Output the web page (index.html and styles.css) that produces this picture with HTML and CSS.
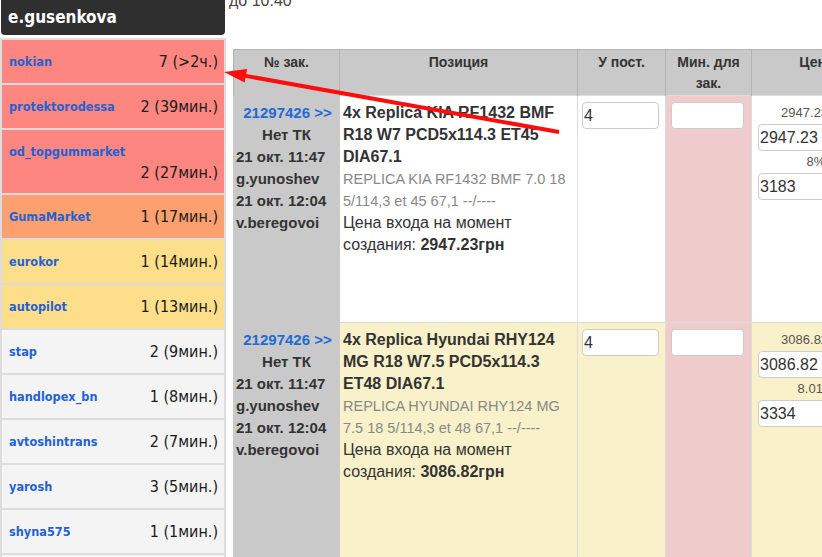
FILE: index.html
```html
<!DOCTYPE html>
<html lang="ru">
<head>
<meta charset="utf-8">
<title>Заказы поставщикам</title>
<link rel="stylesheet" href="styles.css">
</head>
<body>
<div class="page">
  <aside class="sidebar">
    <div class="sidebar-head">e.gusenkova</div>
    <ul class="supplier-list">
      <li class="supplier supplier--red"><a class="supplier-name" href="#">nokian</a><span class="count">7 (&gt;2ч.)</span></li>
      <li class="supplier supplier--red"><a class="supplier-name" href="#">protektorodessa</a><span class="count">2 (39мин.)</span></li>
      <li class="supplier supplier--red supplier--stacked"><a class="supplier-name" href="#">od_topgummarket</a><span class="count">2 (27мин.)</span></li>
      <li class="supplier supplier--orange"><a class="supplier-name" href="#">GumaMarket</a><span class="count">1 (17мин.)</span></li>
      <li class="supplier supplier--yellow"><a class="supplier-name" href="#">eurokor</a><span class="count">1 (14мин.)</span></li>
      <li class="supplier supplier--yellow"><a class="supplier-name" href="#">autopilot</a><span class="count">1 (13мин.)</span></li>
      <li class="supplier"><a class="supplier-name" href="#">stap</a><span class="count">2 (9мин.)</span></li>
      <li class="supplier"><a class="supplier-name" href="#">handlopex_bn</a><span class="count">1 (8мин.)</span></li>
      <li class="supplier"><a class="supplier-name" href="#">avtoshintrans</a><span class="count">2 (7мин.)</span></li>
      <li class="supplier"><a class="supplier-name" href="#">yarosh</a><span class="count">3 (5мин.)</span></li>
      <li class="supplier"><a class="supplier-name" href="#">shyna575</a><span class="count">1 (1мин.)</span></li>
      <li class="supplier"><a class="supplier-name" href="#">&nbsp;</a><span class="count">&nbsp;</span></li>
    </ul>
  </aside>

  <main class="main">
    <div class="note">до 10:40</div>
    <table class="orders">
      <colgroup>
        <col class="col-id">
        <col class="col-pos">
        <col class="col-qty">
        <col class="col-min">
        <col class="col-price">
      </colgroup>
      <thead>
        <tr>
          <th>№ зак.</th>
          <th>Позиция</th>
          <th>У пост.</th>
          <th>Мин. для зак.</th>
          <th>Цена</th>
        </tr>
      </thead>
      <tbody>
        <tr class="order">
          <td class="cell-id">
            <a class="order-link" href="#">21297426 &gt;&gt;</a>
            <div class="center">Нет ТК</div>
            <div>21 окт. 11:47</div>
            <div>g.yunoshev</div>
            <div>21 окт. 12:04</div>
            <div>v.beregovoi</div>
          </td>
          <td class="cell-pos">
            <div class="pos-title">4x Replica KIA RF1432 BMF R18 W7 PCD5x114.3 ET45 DIA67.1</div>
            <div class="pos-sub">REPLICA KIA RF1432 BMF 7.0 18 5/114,3 et 45 67,1 --/----</div>
            <div class="pos-note">Цена входа на момент создания: <b>2947.23грн</b></div>
          </td>
          <td class="cell-qty"><input class="field field--qty" type="text" value="4"></td>
          <td class="cell-min"><input class="field field--min" type="text" value=""></td>
          <td class="cell-price">
            <div class="price-box">
              <div class="price-label">2947.23 грн</div>
              <input class="field field--price" type="text" value="2947.23">
              <div class="price-label price-label--pct">8%</div>
              <input class="field field--price" type="text" value="3183">
            </div>
          </td>
        </tr>
        <tr class="order order--new">
          <td class="cell-id">
            <a class="order-link" href="#">21297426 &gt;&gt;</a>
            <div class="center">Нет ТК</div>
            <div>21 окт. 11:47</div>
            <div>g.yunoshev</div>
            <div>21 окт. 12:04</div>
            <div>v.beregovoi</div>
          </td>
          <td class="cell-pos">
            <div class="pos-title">4x Replica Hyundai RHY124 MG R18 W7.5 PCD5x114.3 ET48 DIA67.1</div>
            <div class="pos-sub">REPLICA HYUNDAI RHY124 MG 7.5 18 5/114,3 et 48 67,1 --/----</div>
            <div class="pos-note">Цена входа на момент создания: <b>3086.82грн</b></div>
          </td>
          <td class="cell-qty"><input class="field field--qty" type="text" value="4"></td>
          <td class="cell-min"><input class="field field--min" type="text" value=""></td>
          <td class="cell-price">
            <div class="price-box">
              <div class="price-label">3086.82 грн</div>
              <input class="field field--price" type="text" value="3086.82">
              <div class="price-label price-label--pct">8.01%</div>
              <input class="field field--price" type="text" value="3334">
            </div>
          </td>
        </tr>
      </tbody>
    </table>
  </main>
</div>

<svg class="annotation" width="822" height="557" viewBox="0 0 822 557" aria-hidden="true">
  <line x1="243" y1="75.4" x2="559" y2="132" stroke="#ff0c0c" stroke-width="4"/>
  <polygon points="224,72 247.2,69 244.6,82.6" fill="#ff0c0c"/>
</svg>
</body>
</html>
```

FILE: styles.css
```css
html, body {
  margin: 0;
  padding: 0;
  overflow: hidden;
  background: #fff;
}

body {
  font-family: "Liberation Sans", Arial, sans-serif;
  color: #333;
  position: relative;
  width: 822px;
  height: 557px;
}

.page {
  display: flex;
  align-items: flex-start;
}

/* ---------- sidebar ---------- */
.sidebar {
  width: 226px;
  flex: none;
  font-family: "DejaVu Sans Condensed", "DejaVu Sans", Verdana, sans-serif;
}

.sidebar-head {
  margin: 0 1px;
  height: 35px;
  box-sizing: border-box;
  background: #2f2f2f;
  border-radius: 0 0 4px 4px;
  color: #fff;
  font-weight: bold;
  font-size: 17px;
  line-height: 35px;
  padding-left: 7px;
}

.supplier-list {
  list-style: none;
  margin: 3px 0 0;
  padding: 2px;
  background: #dcdcdc;
  display: flex;
  flex-direction: column;
  gap: 2px;
}

.supplier {
  display: flex;
  align-items: center;
  justify-content: space-between;
  padding: 11px 6px 11px 7px;
  line-height: 21px;
  background: #f4f4f4;
}

.supplier--red { background: #fd8680; }
.supplier--orange { background: #fda070; }
.supplier--yellow { background: #fdde8a; }

.supplier--stacked {
  flex-direction: column;
  align-items: stretch;
  padding-bottom: 10px;
}

.supplier--stacked .count {
  align-self: flex-end;
}

.supplier-name {
  color: #1f62d4;
  font-weight: bold;
  font-size: 12.6px;
  text-decoration: none;
}

.count {
  color: #1a1a1a;
  font-size: 16px;
}

/* ---------- main ---------- */
.main {
  padding-left: 3px;
  flex: 1;
  min-width: 0;
}

.note {
  margin-top: -9px;
  line-height: 20px;
  font-size: 16px;
  color: #444;
}

.orders {
  margin: 38px 0 0 4px;
  border-collapse: collapse;
  table-layout: fixed;
  width: 648px;
  border-left: 1px solid #aaa;
}

.col-id { width: 106px; }
.col-pos { width: 238px; }
.col-qty { width: 88px; }
.col-min { width: 86px; }
.col-price { width: 130px; }

.orders th {
  background: #c9c9c9;
  border: 1px solid #b3b3b3;
  border-bottom: none;
  padding: 2px 4px 1px;
  font-size: 14px;
  line-height: 21px;
  font-weight: bold;
  color: #333;
  vertical-align: top;
  text-align: center;
  height: 42px;
}

.orders td {
  border: 1px solid #dcdcdc;
  vertical-align: top;
  padding: 6px 3px;
  background: #fff;
}

.order td { height: 214px; }
.order--new td { height: 240px; }

.order--new .cell-pos,
.order--new .cell-qty,
.order--new .cell-price { background: #f9f1c9; }

.orders td.cell-id {
  background: #c9c9c9;
  border-color: #c9c9c9;
  font-size: 15px;
  font-weight: bold;
  line-height: 22px;
  padding: 6px 2px 6px 2px;
}

.order-link {
  display: block;
  text-align: center;
  color: #1f6ad6;
  text-decoration: none;
  padding-left: 2px;
}

.center { text-align: center; }

.cell-pos {
  line-height: 22px;
}

.pos-title {
  font-weight: bold;
  font-size: 16px;
  color: #333;
}

.pos-sub {
  font-size: 14.5px;
  color: #888;
}

.pos-note {
  font-size: 16px;
  color: #333;
}

.orders td.cell-qty { padding: 6px 4px; }
.orders td.cell-min { padding: 6px 5px; background: #f0cbcb; }
.orders td.cell-price { padding: 6px 6px; }

.field {
  display: block;
  box-sizing: border-box;
  height: 27px;
  border: 1px solid #ccc;
  border-radius: 4px;
  background: #fff;
  font-family: "Liberation Sans", Arial, sans-serif;
  font-size: 16px;
  color: #333;
  padding: 0 1px;
  margin: 0;
}

.field--qty { width: 77px; }
.field--min { width: 73px; }
.field--price { width: 116px; }

.price-box {
  width: 116px;
}

.price-label {
  text-align: center;
  font-size: 13px;
  line-height: 22px;
  color: #555;
}

.price-label--pct {
  line-height: 22px;
}

.annotation {
  position: absolute;
  left: 0;
  top: 0;
  pointer-events: none;
}
```
